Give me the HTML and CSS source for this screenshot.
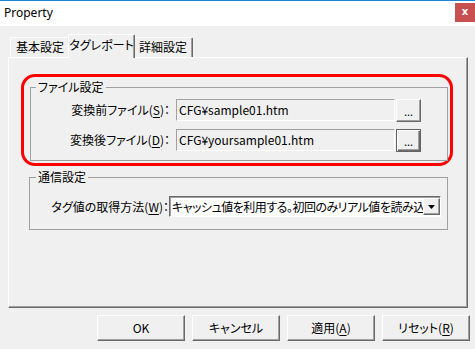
FILE: index.html
```html
<!DOCTYPE html>
<html lang="ja">
<head>
<meta charset="utf-8">
<title>Property</title>
<link rel="stylesheet" href="styles.css">
</head>
<body>
<div class="window">
  <div class="titlebar">
    <span class="title">Property</span>
    <span class="close">x</span>
  </div>
  <div class="tabs">
    <div class="tab tab-first">基本設定</div>
    <div class="tab tab-sel">タグレポート</div>
    <div class="tab tab-last">詳細設定</div>
  </div>
  <div class="panel">
    <div class="hilite">
      <fieldset class="group group-file">
        <legend>ファイル設定</legend>
        <div class="row">
          <span class="lbl">変換前ファイル(<u>S</u>)：</span>
          <div class="field">CFG¥sample01.htm</div>
          <button class="browse">...</button>
        </div>
        <div class="row row-2">
          <span class="lbl">変換後ファイル(<u>D</u>)：</span>
          <div class="field">CFG¥yoursample01.htm</div>
          <button class="browse browse-default">...</button>
        </div>
      </fieldset>
    </div>
    <fieldset class="group group-comm">
      <legend>通信設定</legend>
      <div class="row">
        <span class="lbl lbl-comm">タグ値の取得方法(<u>W</u>)：</span>
        <div class="select">
          <span class="select-text">キャッシュ値を利用する。初回のみリアル値を読み込む</span>
          <span class="select-btn"><svg width="7" height="4" viewBox="0 0 7 4"><path d="M0 0h7L3.5 4z" fill="#000"/></svg></span>
        </div>
      </div>
    </fieldset>
  </div>
  <div class="actions">
    <button class="btn">OK</button>
    <button class="btn">キャンセル</button>
    <button class="btn">適用(<u>A</u>)</button>
    <button class="btn">リセット(<u>R</u>)</button>
  </div>
</div>
</body>
</html>
```
FILE: styles.css
```css
* { box-sizing: border-box; }
html, body { margin: 0; padding: 0; }
body {
  background: #f0f0f0;
  font-family: "Noto Sans CJK JP", "Noto Sans", sans-serif;
  font-size: 12px;
  line-height: 16px;
  color: #000;
  font-feature-settings: "palt";
  width: 475px;
  height: 349px;
  overflow: hidden;
}
.window { width: 475px; height: 349px; }

.titlebar {
  height: 26px;
  background: #fff;
  border-top: 1px solid #1883d7;
  display: flex;
  align-items: flex-start;
}
.title {
  font-family: "Noto Sans", sans-serif;
  font-feature-settings: normal;
  font-size: 12px;
  line-height: 24px;
  padding-left: 4px;
}
.close {
  margin-left: auto;
  margin-top: 2px;
  width: 20px;
  height: 19px;
  background: #c75050;
  color: #fff;
  font-family: "DejaVu Sans", sans-serif;
  font-weight: bold;
  font-size: 10px;
  line-height: 17px;
  text-align: center;
}

.tabs {
  margin-top: 8px;
  padding-left: 10px;
  height: 23px;
  display: flex;
  align-items: flex-end;
}
.tab {
  height: 20px;
  background: #f0f0f0;
  border-top: 1px solid #fff;
  border-left: 1px solid #fff;
  border-right: 1px solid #696969;
  box-shadow: inset -1px 0 0 #a0a0a0;
  border-radius: 2px 2px 0 0;
  text-align: center;
  line-height: 18px;
  white-space: nowrap;
}
.tab-first { width: 60px; }
.tab-last { width: 60px; }
.tab-sel {
  width: 67px;
  height: 24px;
  margin: 0 -2px -1px -2px;
  position: relative;
  z-index: 2;
  line-height: 19px;
}

.panel {
  margin-left: 8px;
  width: 460px;
  height: 251px;
  border: 1px solid;
  border-color: #fff #696969 #696969 #fff;
  box-shadow: inset -1px -1px 0 #a0a0a0;
  display: flex;
  flex-direction: column;
  align-items: flex-start;
}

.hilite {
  margin: 16px 0 0 12px;
  width: 432px;
  height: 92px;
  border: 3px solid #ff0000;
  border-radius: 14px;
  padding: 2px 0 0 6px;
}

.group {
  margin: 0;
  padding: 0;
  border: 1px solid #a0a0a0;
  min-width: 0;
}
.group legend {
  padding: 0 2px;
  line-height: 16px;
}
.group-file {
  width: 418px;
  height: 82px;
  padding: 4px 0 0 0;
}
.group-file legend { margin-left: 5px; }
.group-comm {
  margin: 3px 0 0 20px;
  width: 419px;
  height: 61px;
  padding: 11px 0 0 0;
}
.group-comm legend { margin-left: 6px; }

.row {
  display: flex;
  align-items: flex-start;
  height: 23px;
}
.row-2 { margin-top: 7px; }
.lbl {
  width: 139px;
  margin-right: 6px;
  text-align: right;
  line-height: 22px;
  white-space: nowrap;
}
.lbl-comm { margin-right: 0; line-height: 21px; }

.field {
  width: 219px;
  height: 22px;
  border: 1px solid;
  border-color: #a0a0a0 #fff #fff #a0a0a0;
  background: #f0f0f0;
  padding-left: 2px;
  line-height: 20px;
  white-space: nowrap;
  overflow: hidden;
  font-feature-settings: normal;
}
.browse {
  margin-left: 1px;
  width: 25px;
  height: 23px;
  padding: 0;
  font: inherit;
  font-size: 11px;
  line-height: 14px;
  background: #f0f0f0;
  border: 1px solid;
  border-color: #fff #696969 #696969 #fff;
  box-shadow: inset -1px -1px 0 #a0a0a0;
  color: #000;
}
.browse-default {
  border: 1px solid #646464;
  box-shadow: inset 1px 1px 0 #fff, inset -1px -1px 0 #696969, inset -2px -2px 0 #a0a0a0;
}

.select {
  width: 272px;
  height: 21px;
  border: 1px solid;
  border-color: #696969 #fff #fff #696969;
  box-shadow: inset 1px 1px 0 #a0a0a0;
  background: #fff;
  display: flex;
  align-items: stretch;
  padding: 1px 0 1px 2px;
}
.select-text {
  flex: 1;
  min-width: 0;
  overflow: hidden;
  white-space: nowrap;
  line-height: 17px;
  letter-spacing: -0.5px;
}
.select-btn {
  width: 17px;
  background: #f0f0f0;
  border: 1px solid;
  border-color: #fff #696969 #696969 #fff;
  box-shadow: inset -1px -1px 0 #a0a0a0;
  display: flex;
  align-items: center;
  justify-content: center;
}

.actions {
  margin-top: 7px;
  padding-left: 97px;
  display: flex;
  gap: 7px;
}
.btn {
  width: 88px;
  height: 26px;
  padding: 0;
  font: inherit;
  color: #000;
  background: #f0f0f0;
  border: 1px solid;
  border-color: #fff #696969 #696969 #fff;
  box-shadow: inset -1px -1px 0 #a0a0a0;
  line-height: 22px;
}
u { text-decoration-thickness: 1px; text-underline-offset: 2px; }
```
